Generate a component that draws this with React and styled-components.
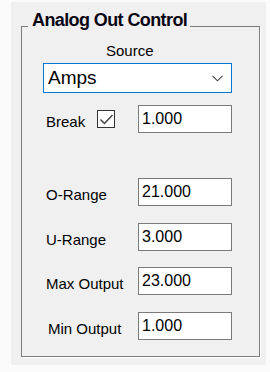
import React from "react";
import styled, { createGlobalStyle } from "styled-components";

const GlobalStyle = createGlobalStyle`
  html, body { margin: 0; padding: 0; background: #fbfbfb; }
  body { font-family: "Liberation Sans", Arial, sans-serif; color: #000; }
`;

const Panel = styled.div`
  margin: 2px 0 0 11px;
  width: 255px;
  box-sizing: border-box;
  background: #f0f0f0;
  padding: 24px 0 8px 10px;
`;

const Group = styled.section`
  width: 239px;
  box-sizing: border-box;
  padding: 0 0 16px 0;
  border: 1px solid #7c7c7c;
  box-shadow: 1px 1px 0 #ffffff;
  display: flex;
  flex-direction: column;
  align-items: flex-start;
`;

const Title = styled.h2`
  margin: -16px 0 0 6px;
  padding: 0 3px 0 4px;
  background: #f0f0f0;
  font-size: 18px;
  line-height: 18px;
  font-weight: bold;
  letter-spacing: -0.6px;
  color: #0a0614;
`;

const Caption = styled.div`
  margin: 13px 0 0 84px;
  font-size: 15px;
  line-height: 17px;
`;

const Combo = styled.div`
  margin: 4px 0 0 21px;
  width: 189px;
  height: 30px;
  box-sizing: border-box;
  border: 1px solid #0078d7;
  background: #fff;
  display: flex;
  align-items: center;
  justify-content: space-between;
  padding: 0 8px 0 4px;
  font-size: 19px;
`;

const Row = styled.div`
  margin: ${(p) => p.$top}px 0 0 24px;
  display: grid;
  grid-template-columns: 92px 94px;
  align-items: center;
  height: 28px;
`;

const LabelCell = styled.div`
  display: flex;
  align-items: center;
  padding-top: 4px;
  font-size: 15px;
  line-height: 17px;
  padding-left: ${(p) => p.$indent || 0}px;
`;

const Check = styled.span`
  margin-left: 12px;
  margin-top: -4px;
  width: 18px;
  height: 18px;
  box-sizing: border-box;
  border: 1px solid #333;
  background: #fff;
  display: flex;
  align-items: center;
  justify-content: center;
`;

const Field = styled.div`
  height: 28px;
  box-sizing: border-box;
  border: 1px solid #7a7a7a;
  background: #fff;
  display: flex;
  align-items: center;
  padding-left: 3px;
  font-size: 16px;
`;

const rows = [
  { label: "O-Range", value: "21.000", top: 45 },
  { label: "U-Range", value: "3.000", top: 17 },
  { label: "Max Output", value: "23.000", top: 16 },
  { label: "Min Output", value: "1.000", top: 17, indent: 2 },
];

export default function App() {
  return (
    <>
      <GlobalStyle />
      <Panel>
        <Group>
          <Title>Analog Out Control</Title>
          <Caption>Source</Caption>
          <Combo>
            <span>Amps</span>
            <svg width="11" height="7" viewBox="0 0 11 7">
              <path d="M0.5 0.8 L5.5 5.8 L10.5 0.8" fill="none" stroke="#444" strokeWidth="1.1" />
            </svg>
          </Combo>
          <Row $top={12}>
            <LabelCell>
              Break
              <Check>
                <svg width="15" height="13" viewBox="0 0 15 13">
                  <path d="M1.5 6.5 L5.5 10.5 L13.5 2" fill="none" stroke="#444" strokeWidth="1.5" />
                </svg>
              </Check>
            </LabelCell>
            <Field>1.000</Field>
          </Row>
          {rows.map((r) => (
            <Row key={r.label} $top={r.top}>
              <LabelCell $indent={r.indent}>{r.label}</LabelCell>
              <Field>{r.value}</Field>
            </Row>
          ))}
        </Group>
      </Panel>
    </>
  );
}
